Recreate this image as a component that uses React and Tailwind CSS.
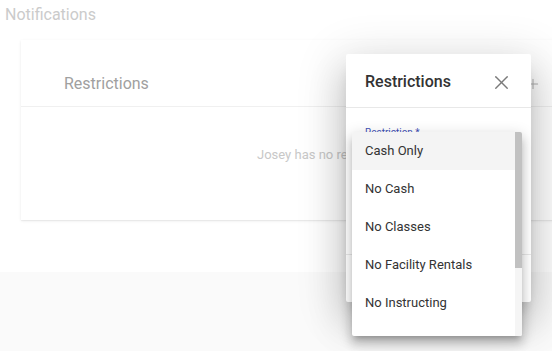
import { X, Plus } from 'lucide-react';

const options = ['Cash Only', 'No Cash', 'No Classes', 'No Facility Rentals', 'No Instructing'];

export default function App() {
  return (
    <div className="relative w-[552px] h-[351px] overflow-hidden bg-white font-['Roboto',sans-serif]">
      {/* Page behind the dialog */}
      <div className="h-[272px] bg-white">
        <div className="pl-[5px] pt-[5px] text-[16px] leading-[20px] text-[#cbcbcb]">Notifications</div>
        <div className="ml-[21px] mt-[15px] w-[560px] h-[180px] bg-white shadow-[0_1px_3px_rgba(0,0,0,0.08),0_1px_1px_rgba(0,0,0,0.04)]">
          <div className="h-[67px] pt-[34px] pl-[43px] pr-[40px] grid grid-cols-[1fr_auto] items-start border-b border-[#f0f0f0]">
            <span className="text-[16px] leading-[20px] text-[#a0a0a0]">Restrictions</span>
            <Plus className="mt-[2px] w-[16px] h-[16px] text-[#b0b0b0]" strokeWidth={1.5} />
          </div>
          <div className="pl-[236px] pt-[38px] text-[13px] text-[#c8c8c8]">Josey has no restrictions.</div>
        </div>
      </div>
      <div className="h-[79px] bg-[#fafafa]" />

      {/* Dialog */}
      <div className="absolute left-[346px] top-[54px] w-[185px] h-[248px] bg-white rounded-[2px] shadow-[0_11px_15px_-7px_rgba(0,0,0,0.2),0_24px_38px_3px_rgba(0,0,0,0.14),0_9px_46px_8px_rgba(0,0,0,0.12)] flex flex-col">
        <div className="h-[54px] pt-[3px] flex items-center justify-between border-b border-[#e8e8e8] pl-[19px] pr-[18px]">
          <span className="text-[16px] font-medium text-[#333]">Restrictions</span>
          <X className="w-[23px] h-[23px] text-[#7a7a7a]" strokeWidth={1.4} />
        </div>
        <div className="flex-1 pl-[19px] pt-[19px]">
          <div className="text-[10px] leading-[12px] text-[#3f51b5]">Restriction *</div>
        </div>
        <div className="h-[48px] border-t border-[#e8e8e8]" />
      </div>

      {/* Select menu */}
      <div className="absolute left-[352px] top-[132px] w-[170px] h-[204px] bg-white rounded-[2px] flex shadow-[0_5px_5px_-3px_rgba(0,0,0,0.2),0_8px_10px_1px_rgba(0,0,0,0.14),0_3px_14px_2px_rgba(0,0,0,0.12)] overflow-hidden">
        <ul className="flex-1">
          {options.map((o, i) => (
            <li
              key={o}
              className={`h-[38px] flex items-center pl-[13px] text-[13px] text-[#333] ${i === 0 ? 'bg-[#f4f4f4]' : ''}`}
            >
              {o}
            </li>
          ))}
        </ul>
        <div className="w-[7px] bg-[#f5f5f5]">
          <div className="h-[136px] bg-[#c1c1c1]" />
        </div>
      </div>
    </div>
  );
}
